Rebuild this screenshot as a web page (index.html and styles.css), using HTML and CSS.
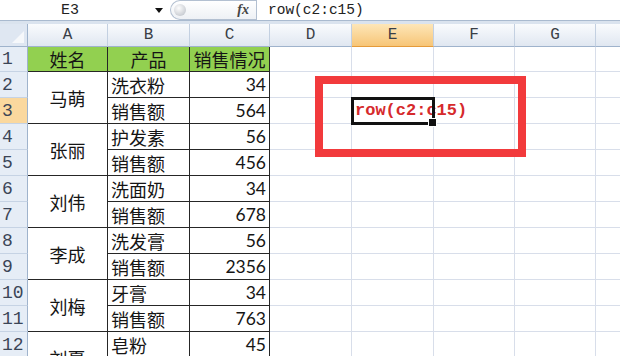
FILE: index.html
```html
<!DOCTYPE html>
<html lang="zh">
<head>
<meta charset="utf-8">
<title>Sheet</title>
<link rel="stylesheet" href="styles.css">
</head>
<body>
<div class="topbar">
  <div class="namebox">E3</div>
  <div class="arrow"><span class="tri"></span></div>
  <div class="expander"><span class="knob"></span><span class="fx">fx</span></div>
  <div class="formula">row(c2:c15)</div>
</div>
<div class="sheet">
  <div class="corner"></div>
  <div class="ch">A</div><div class="ch">B</div><div class="ch">C</div><div class="ch">D</div><div class="ch sel">E</div><div class="ch">F</div><div class="ch">G</div><div class="ch"></div>

  <div class="rh">1</div>
  <div class="t hd">姓名</div><div class="t hd">产品</div><div class="t hd">销售情况</div>
  <div class="c"></div><div class="c"></div><div class="c"></div><div class="c"></div><div class="c"></div>

  <div class="rh">2</div>
  <div class="t nm">马萌</div><div class="t">洗衣粉</div><div class="t num">34</div>
  <div class="c"></div><div class="c"></div><div class="c"></div><div class="c"></div><div class="c"></div>
  <div class="rh sel">3</div>
  <div class="t">销售额</div><div class="t num">564</div>
  <div class="c"></div><div class="c sel"><span class="val">row(c2:c15)</span></div><div class="c"></div><div class="c"></div><div class="c"></div>

  <div class="rh">4</div>
  <div class="t nm">张丽</div><div class="t">护发素</div><div class="t num">56</div>
  <div class="c"></div><div class="c"></div><div class="c"></div><div class="c"></div><div class="c"></div>
  <div class="rh">5</div>
  <div class="t">销售额</div><div class="t num">456</div>
  <div class="c"></div><div class="c"></div><div class="c"></div><div class="c"></div><div class="c"></div>

  <div class="rh">6</div>
  <div class="t nm">刘伟</div><div class="t">洗面奶</div><div class="t num">34</div>
  <div class="c"></div><div class="c"></div><div class="c"></div><div class="c"></div><div class="c"></div>
  <div class="rh">7</div>
  <div class="t">销售额</div><div class="t num">678</div>
  <div class="c"></div><div class="c"></div><div class="c"></div><div class="c"></div><div class="c"></div>

  <div class="rh">8</div>
  <div class="t nm">李成</div><div class="t">洗发膏</div><div class="t num">56</div>
  <div class="c"></div><div class="c"></div><div class="c"></div><div class="c"></div><div class="c"></div>
  <div class="rh">9</div>
  <div class="t">销售额</div><div class="t num">2356</div>
  <div class="c"></div><div class="c"></div><div class="c"></div><div class="c"></div><div class="c"></div>

  <div class="rh">10</div>
  <div class="t nm">刘梅</div><div class="t">牙膏</div><div class="t num">34</div>
  <div class="c"></div><div class="c"></div><div class="c"></div><div class="c"></div><div class="c"></div>
  <div class="rh">11</div>
  <div class="t">销售额</div><div class="t num">763</div>
  <div class="c"></div><div class="c"></div><div class="c"></div><div class="c"></div><div class="c"></div>

  <div class="rh">12</div>
  <div class="t nm">刘夏</div><div class="t">皂粉</div><div class="t num">45</div>
  <div class="c"></div><div class="c"></div><div class="c"></div><div class="c"></div><div class="c"></div>
</div>
<div class="note"></div>
</body>
</html>
```
FILE: styles.css
```css
* { box-sizing: border-box; }
html, body { margin: 0; padding: 0; }
body {
  width: 620px;
  height: 356px;
  overflow: hidden;
  position: relative;
  background: #fff;
  font-family: "Liberation Sans", sans-serif;
}

/* formula bar */
.topbar {
  display: flex;
  height: 21px;
  border-bottom: 1px solid #a9bacf;
  background: #fff;
}
.namebox {
  width: 150px;
  padding-right: 10px;
  display: flex;
  align-items: center;
  justify-content: center;
  font: 15px "Liberation Mono", monospace;
  line-height: 1;
  color: #222;
}
.arrow {
  width: 20px;
  display: flex;
  align-items: center;
  padding-left: 5px;
}
.tri {
  width: 0;
  height: 0;
  border-left: 4px solid transparent;
  border-right: 4px solid transparent;
  border-top: 5px solid #111;
}
.expander {
  width: 86px;
  height: 20px;
  border: 1px solid #b3c0d1;
  border-right: none;
  border-radius: 10px 0 0 10px;
  background: linear-gradient(#ffffff, #eef1f5);
  display: flex;
  align-items: center;
  justify-content: space-between;
  padding: 0 7px 0 3px;
}
.knob {
  width: 12px;
  height: 12px;
  border-radius: 50%;
  background: radial-gradient(circle at 40% 35%, #fdfdfd, #b7bcc4);
}
.fx {
  font: italic bold 14px "Liberation Serif", serif;
  line-height: 1;
  color: #444;
}
.formula {
  flex: 1;
  border-left: 1px solid #b3c0d1;
  padding-left: 11px;
  display: flex;
  align-items: center;
  font: 14.5px "Liberation Mono", monospace;
  line-height: 1;
  color: #222;
}

/* grid */
.sheet {
  display: grid;
  grid-template-columns: 28px 80px 82px 80px 82px 82px 81px 81px 40px;
  grid-template-rows: 23px 25px repeat(12, 26px);
  border-top: 3px solid #dae3ee;
}
.corner {
  position: relative;
  background: #dfe7f2;
  border-right: 1px solid #9fb3cc;
  border-bottom: 1px solid #9fb3cc;
}
.corner::after {
  content: "";
  position: absolute;
  right: 3px;
  bottom: 3px;
  width: 0;
  height: 0;
  border-left: 12px solid transparent;
  border-bottom: 12px solid #f6f8fb;
}
.ch {
  background: linear-gradient(#f9fbfd, #e0e7f1);
  border-right: 1px solid #c3d0e1;
  border-bottom: 1px solid #9fb3cc;
  display: flex;
  align-items: center;
  justify-content: center;
  font: 16px "Liberation Mono", monospace;
  line-height: 1;
  color: #3a3f47;
}
.ch.sel {
  background: linear-gradient(#fde6b8, #f7c577);
  border-bottom-color: #e59b3a;
}
.rh {
  background: #e6edf6;
  border-right: 1px solid #9fb3cc;
  border-bottom: 1px solid #c6d3e4;
  display: flex;
  align-items: center;
  padding-left: 2px;
  font: 18px "Liberation Mono", monospace;
  line-height: 1;
  color: #3b4556;
}
.rh.sel { background: #fad89e; }

.c {
  border-right: 1px solid #d8deea;
  border-bottom: 1px solid #d8deea;
}
.c.sel {
  position: relative;
  z-index: 2;
  display: flex;
  align-items: center;
  padding-left: 3px;
  white-space: nowrap;
  outline: 3px solid #111;
  outline-offset: -2px;
}
.c.sel::after {
  content: "";
  position: absolute;
  right: -4px;
  bottom: -4px;
  width: 7px;
  height: 7px;
  background: #111;
  border: 1px solid #fff;
}
.val {
  font: bold 17px "Liberation Mono", monospace;
  color: #d62a2c;
  line-height: 1;
}

.t {
  border-right: 1px solid #262626;
  border-bottom: 1px solid #262626;
  display: flex;
  align-items: center;
  padding: 0 3px;
  white-space: nowrap;
  overflow: hidden;
  font: 18px "Noto Sans CJK SC", sans-serif;
  line-height: 1;
  color: #151515;
}
.hd {
  background: #92d050;
  justify-content: center;
}
.nm {
  grid-row: span 2;
  justify-content: center;
}
.num {
  justify-content: flex-end;
  font-family: Lato, "Liberation Sans", sans-serif;
  font-size: 17.5px;
}

/* annotation */
.note {
  position: absolute;
  left: 315px;
  top: 76px;
  width: 211px;
  height: 81px;
  border: 8px solid #f23a3c;
  z-index: 3;
}
```
